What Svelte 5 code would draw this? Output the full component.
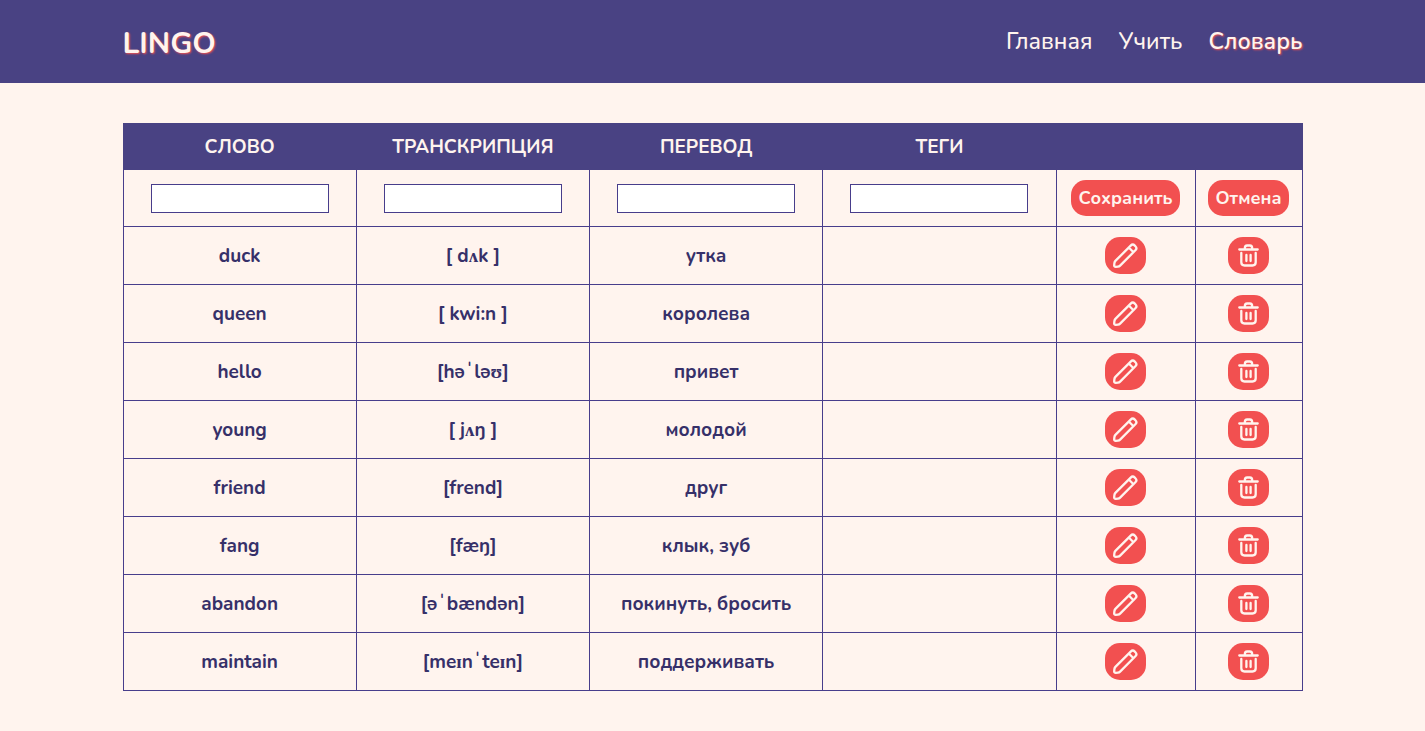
<script>
  const columns = ['слово', 'транскрипция', 'перевод', 'теги'];

  let draft = $state(['', '', '', '']);
  let words = $state([
    { english: 'duck', transcription: '[ dʌk ]', russian: 'утка', tags: '' },
    { english: 'queen', transcription: '[ kwi:n ]', russian: 'королева', tags: '' },
    { english: 'hello', transcription: '[həˈləʊ]', russian: 'привет', tags: '' },
    { english: 'young', transcription: '[ jʌŋ ]', russian: 'молодой', tags: '' },
    { english: 'friend', transcription: '[frend]', russian: 'друг', tags: '' },
    { english: 'fang', transcription: '[fæŋ]', russian: 'клык, зуб', tags: '' },
    { english: 'abandon', transcription: '[əˈbændən]', russian: 'покинуть, бросить', tags: '' },
    { english: 'maintain', transcription: '[meɪnˈteɪn]', russian: 'поддерживать', tags: '' }
  ]);

  function clear() {
    draft = ['', '', '', ''];
  }

  function save() {
    if (!draft[0]) return;
    const [english, transcription, russian, tags] = draft;
    words.unshift({ english, transcription, russian, tags });
    clear();
  }

  function edit(index) {
    const w = words[index];
    draft = [w.english, w.transcription, w.russian, w.tags];
    words.splice(index, 1);
  }
</script>

<header>
  <div class="container bar">
    <a class="logo" href="#home">LINGO</a>
    <nav>
      <a href="#home">Главная</a>
      <a href="#learn">Учить</a>
      <a href="#words" class="active" aria-current="page">Словарь</a>
    </nav>
  </div>
</header>

<main class="container">
  <table>
    <colgroup>
      <col /><col /><col /><col />
      <col class="col-edit" />
      <col class="col-remove" />
    </colgroup>
    <thead>
      <tr>
        {#each columns as title}
          <th scope="col">{title}</th>
        {/each}
        <th></th>
        <th></th>
      </tr>
    </thead>
    <tbody>
      <tr class="form-row">
        {#each columns as title, i}
          <td><input type="text" aria-label={title} bind:value={draft[i]} /></td>
        {/each}
        <td><button onclick={save}>Сохранить</button></td>
        <td><button onclick={clear}>Отмена</button></td>
      </tr>
      {#each words as word, i}
        <tr>
          <td>{word.english}</td>
          <td>{word.transcription}</td>
          <td>{word.russian}</td>
          <td>{word.tags}</td>
          <td>
            <button class="icon" aria-label="Редактировать" onclick={() => edit(i)}>
              <svg viewBox="0 0 27 27" aria-hidden="true">
                <path d="M3.4 18.9 18.7 3.6a2.9 2.9 0 0 1 4.1 0l.6.6a2.9 2.9 0 0 1 0 4.1L8.1 23.6c-.6.6-1.3.9-2.2 1l-2.1.2c-1 .1-1.7-.6-1.6-1.6l.2-2.1c.1-.9.4-1.6 1-2.2zM16.8 5.5l4.7 4.7" />
              </svg>
            </button>
          </td>
          <td>
            <button class="icon" aria-label="Удалить" onclick={() => words.splice(i, 1)}>
              <svg viewBox="0 0 27 27" aria-hidden="true">
                <path d="M4.3 7.5h18.4M9.8 7.5V6.3c0-1.6.8-2.8 2.3-2.8h2.8c1.5 0 2.3 1.2 2.3 2.8v1.2M6.3 11v9.3c0 2.1 1.1 3.2 3.2 3.2h8c2.1 0 3.2-1.1 3.2-3.2V11M11.4 13v6M15.6 13v6" />
              </svg>
            </button>
          </td>
        </tr>
      {/each}
    </tbody>
  </table>
</main>

<style>
  :global(body) {
    margin: 0;
    background: #fff4ee;
    color: #363069;
    font-family: Nunito, "Liberation Serif", serif;
  }

  .container {
    box-sizing: border-box;
    max-width: 1180px;
    margin: 0 auto;
  }

  header {
    background: #494283;
  }

  .bar {
    display: flex;
    align-items: center;
    justify-content: space-between;
    min-height: 83px;
  }

  header a {
    color: #fff4ee;
    text-decoration: none;
  }

  .logo {
    font-size: 30px;
    line-height: 41px;
    font-weight: 700;
    padding-top: 4px;
    text-shadow: 1px 1px 2px #f25050;
  }

  nav {
    display: flex;
    gap: 26px;
    padding-top: 1px;
    font-size: 23px;
    line-height: 32px;
    font-weight: 500;
  }

  nav .active {
    font-weight: 600;
    text-shadow: 1px 1px 2px #f25050;
  }

  main {
    padding: 40px 0;
  }

  table {
    width: 100%;
    table-layout: fixed;
    border-collapse: collapse;
    text-align: center;
    font-size: 19px;
    line-height: 26px;
    font-weight: 700;
  }

  .col-edit {
    width: 139px;
  }

  .col-remove {
    width: 107px;
  }

  th {
    box-sizing: border-box;
    height: 46px;
    padding: 0;
    border: 1px solid #494283;
    background: #494283;
    color: #fff4ee;
    text-transform: uppercase;
  }

  td {
    box-sizing: border-box;
    height: 58px;
    padding: 0;
    border: 1px solid #483d8b;
  }

  .form-row td {
    height: 57px;
  }

  input {
    box-sizing: border-box;
    width: 178px;
    max-width: 90%;
    height: 29px;
    padding: 2px 6px;
    border: 1px solid #483d8b;
    background: #fff;
    color: inherit;
    font: inherit;
    font-size: 16px;
    vertical-align: middle;
  }

  button {
    box-sizing: border-box;
    height: 36px;
    padding: 0 7px;
    border: 0;
    border-radius: 15px;
    background: #f25050;
    color: #fff4ee;
    font-family: inherit;
    font-size: 18px;
    font-weight: 700;
    vertical-align: middle;
    cursor: pointer;
  }

  .icon {
    display: inline-flex;
    align-items: center;
    justify-content: center;
    width: 41px;
    height: 37px;
  }

  svg {
    flex: none;
    width: 27px;
    height: 27px;
    fill: none;
    stroke: #fff4ee;
    stroke-width: 2.3;
    stroke-linecap: round;
    stroke-linejoin: round;
  }
</style>
